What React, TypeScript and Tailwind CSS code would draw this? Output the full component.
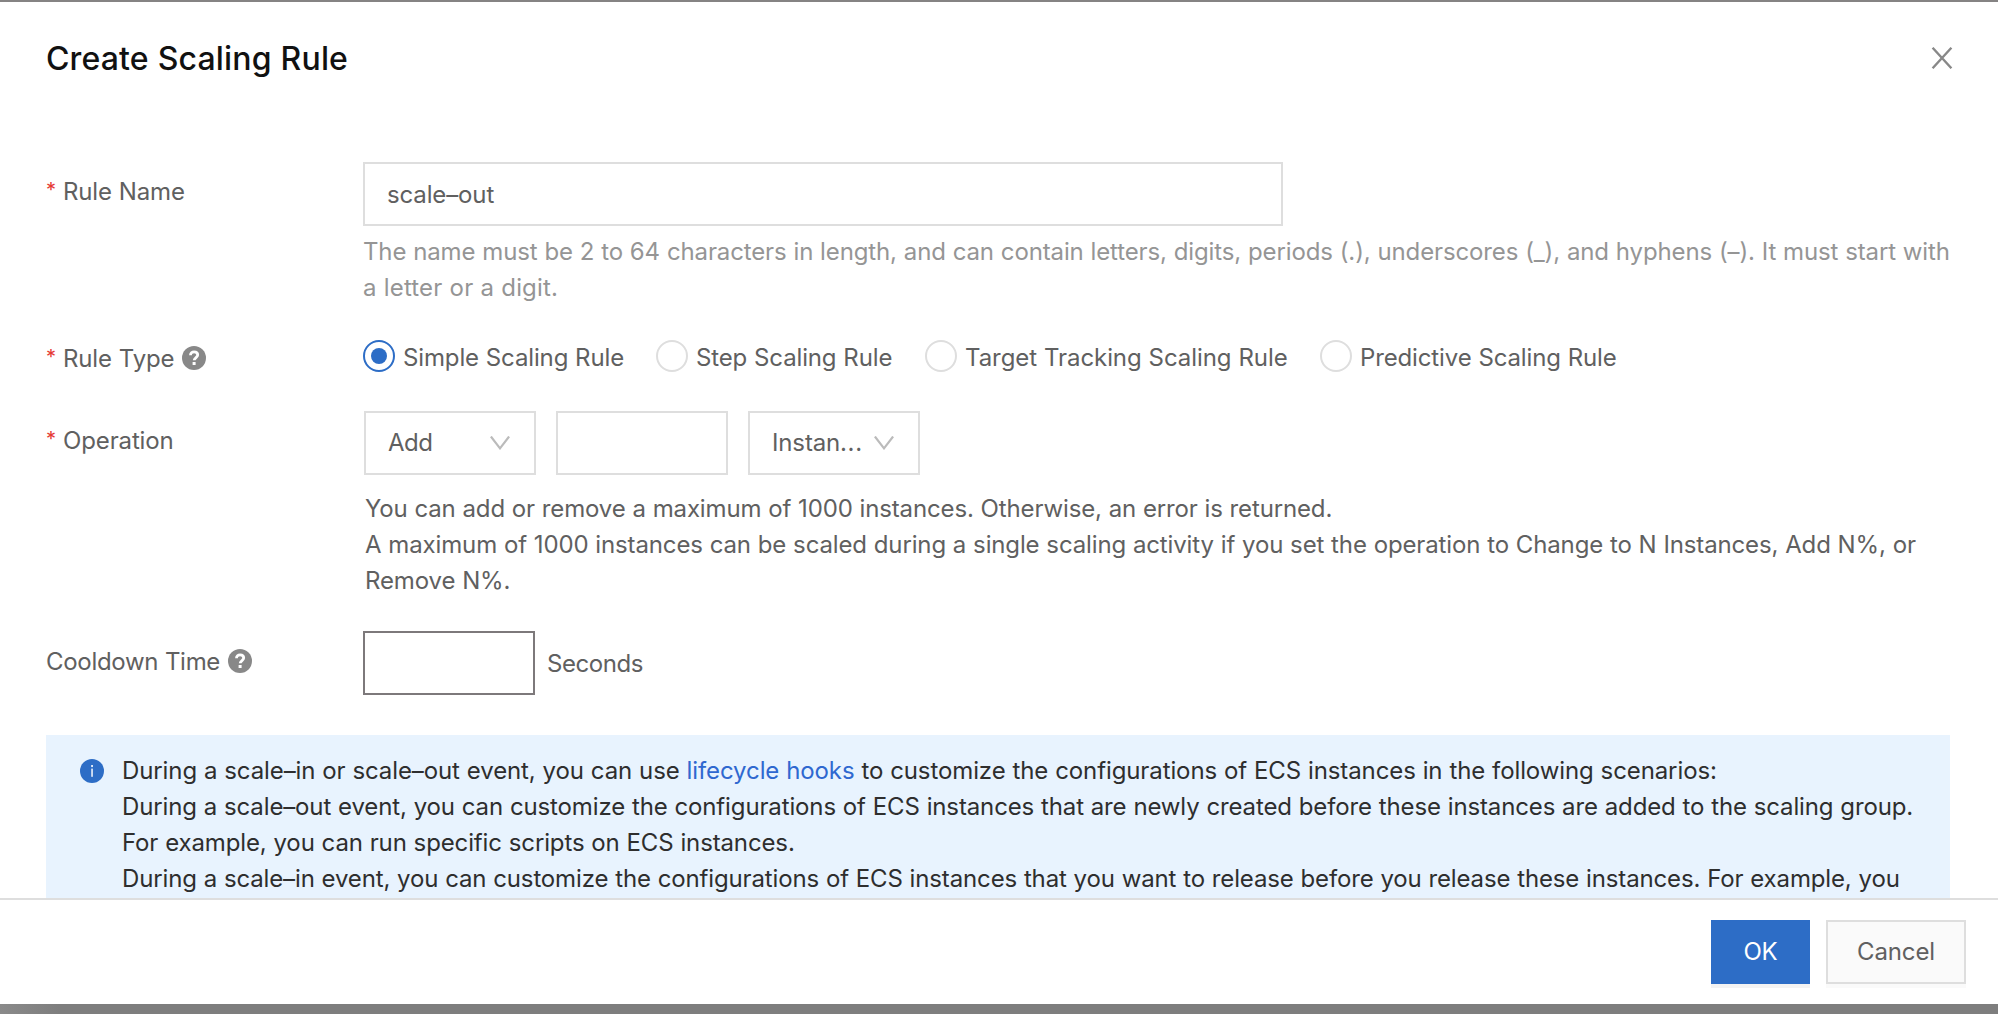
import type { ReactNode } from 'react';

function HelpIcon() {
  return (
    <svg className="h-6 w-6 shrink-0" viewBox="0 0 24 24" fill="none">
      <circle cx="12" cy="12" r="12" fill="#888" />
      <path
        d="M8.5 9.3c0-2.1 1.5-3.4 3.6-3.4s3.6 1.3 3.6 3.1c0 2.4-3.5 2.7-3.5 5.3"
        stroke="#fff"
        strokeWidth="2.8"
      />
      <rect x="10.6" y="16" width="3" height="3" fill="#fff" />
    </svg>
  );
}

function InfoIcon() {
  return (
    <svg className="h-6 w-6 shrink-0" viewBox="0 0 24 24">
      <circle cx="12" cy="12" r="12" fill="#2d6dc6" />
      <rect x="11.1" y="6" width="1.9" height="2.1" fill="#fff" fillOpacity="0.85" />
      <rect x="11.2" y="9.6" width="1.7" height="8.2" fill="#fff" fillOpacity="0.85" />
    </svg>
  );
}

function Chevron() {
  return (
    <svg className="h-[14px] w-5 shrink-0" viewBox="0 0 20 14" fill="none">
      <path d="M0.9 0.5 10 12.3 19.1 0.5" stroke="#bbb" strokeWidth="2.2" />
    </svg>
  );
}

function Label({ text, required, help, className }: { text: string; required?: boolean; help?: boolean; className: string }) {
  return (
    <div className={`flex h-9 w-[317px] shrink-0 ${className}`}>
      {required && <span className="w-[17px] shrink-0 text-[20px] leading-[32px] text-[#e53935]">*</span>}
      <span>{text}</span>
      {help && (
        <span className="ml-2 mt-[5px]">
          <HelpIcon />
        </span>
      )}
    </div>
  );
}

function Radio({ label, checked, className = '' }: { label: string; checked?: boolean; className?: string }) {
  return (
    <label className={`flex shrink-0 ${className}`}>
      <span
        className={`-mt-px flex h-8 w-8 items-center justify-center rounded-full border-2 ${
          checked ? 'border-[#2d6dc6]' : 'border-[#dedede]'
        }`}
      >
        {checked && <span className="h-4 w-4 rounded-full bg-[#2d6dc6]" />}
      </span>
      <span className="-mt-px ml-2 whitespace-nowrap">{label}</span>
    </label>
  );
}

function Select({ children }: { children: ReactNode }) {
  return (
    <div className="flex h-16 w-[172px] items-center justify-between border-2 border-[#dedede] pr-6 pl-[22px]">
      <span>{children}</span>
      <Chevron />
    </div>
  );
}

export default function App() {
  return (
    <div className="flex h-[1014px] w-[1998px] flex-col overflow-hidden bg-[#808080] font-[Inter,sans-serif] text-2xl leading-9 font-normal tracking-[-0.135px] text-[#606060] [word-spacing:0.28px]">
      <div className="h-[2px] shrink-0 bg-[#858383]" />
      <div className="flex h-[896px] shrink-0 flex-col overflow-hidden bg-white pr-12 pl-[46px]">
        <header className="flex h-[160px] shrink-0 items-start justify-between pt-[36px]">
          <h1 className="text-[32px] leading-[41px] font-medium tracking-[0.15px] text-[#111]">Create Scaling Rule</h1>
          <button className="mt-[9px] mr-[-3px]" aria-label="Close">
            <svg className="h-[22px] w-[22px]" viewBox="0 0 22 22" fill="none">
              <path d="M1.6 0.8 20.4 21.2M20.4 0.8 1.6 21.2" stroke="#888" strokeWidth="2.4" />
            </svg>
          </button>
        </header>

        <section className="flex h-[179px] shrink-0">
          <Label text="Rule Name" required className="mt-[12px]" />
          <div className="w-[1600px]">
            <div className="flex h-16 w-[920px] items-center border-2 border-[#dedede] pt-[2px] pl-[22px]">scale–out</div>
            <p className="mt-[8px] whitespace-nowrap tracking-[-0.125px] text-[#959595]">
              The name must be 2 to 64 characters in length, and can contain letters, digits, periods (.), underscores (_), and hyphens (–). It must start with
              <br />
              <span className="tracking-[0.15px]">a letter or a digit.</span>
            </p>
          </div>
        </section>

        <section className="flex h-[70px] shrink-0">
          <Label text="Rule Type" required help className="" />
          <Radio label="Simple Scaling Rule" checked className="w-[293px]" />
          <Radio label="Step Scaling Rule" className="w-[269px]" />
          <Radio label="Target Tracking Scaling Rule" className="w-[395px] tracking-[-0.07px]" />
          <Radio label="Predictive Scaling Rule" />
        </section>

        <section className="flex h-[220px] shrink-0">
          <Label text="Operation" required className="mt-[12px]" />
          <div className="ml-px">
            <div className="flex gap-5">
              <Select>
                <span className="tracking-[-0.5px]">Add</span>
              </Select>
              <div className="h-16 w-[172px] border-2 border-[#dedede]" />
              <Select>
                Instan<span className="tracking-[0.6px]">...</span>
              </Select>
            </div>
            <p className="mt-[16px] ml-px whitespace-nowrap">
              <span className="tracking-[-0.145px]">
                You can add or remove a maximum of 1000 instances. Otherwise, an error is returned.
              </span>
              <br />
              A maximum of 1000 instances can be scaled during a single scaling activity if you set the operation to Change to N Instances, Add N%, or
              <br />
              Remove N%.
            </p>
          </div>
        </section>

        <section className="flex h-[104px] shrink-0">
          <Label text="Cooldown Time" help className="mt-[13px] tracking-[-0.3px]" />
          <div className="h-16 w-[172px] border-2 border-[#7d797b]" />
          <span className="mt-[15px] ml-3 tracking-[-0.45px]">Seconds</span>
        </section>

        <section className="flex h-[240px] shrink-0 bg-[#e8f3fe] pt-[18px] pl-[34px] text-[#2e2e2e]">
          <span className="mt-[6px]">
            <InfoIcon />
          </span>
          <p className="ml-[18px] whitespace-nowrap tracking-[-0.13px]">
            <span className="tracking-[-0.1px]">
              During a scale–in or scale–out event, you can use <a className="text-[#2f68d0]">lifecycle hooks</a> to customize the configurations of ECS instances in the following scenarios:
            </span>
            <br />
            During a scale–out event, you can customize the configurations of ECS instances that are newly created before these instances are added to the scaling group.
            <br />
            For example, you can run specific scripts on ECS instances.
            <br />
            <span className="tracking-[-0.14px]">
              During a scale–in event, you can customize the configurations of ECS instances that you want to release before you release these instances. For example, you
            </span>
          </p>
        </section>
      </div>

      <footer className="flex h-[106px] shrink-0 justify-end gap-4 border-t-2 border-[#dedede] bg-white pt-5 pr-8">
        <button className="h-16 w-[99px] bg-[#2d6dc6] text-white shadow-[0_4px_0_#f3f3f3]">OK</button>
        <button className="h-16 w-[140px] border-2 border-[#dedede] bg-[#fafafa] shadow-[0_4px_0_#fafafa]">Cancel</button>
      </footer>
      <div className="h-[10px] shrink-0 bg-linear-to-r from-[#8a8a8a] via-[#7e7e7e] via-3% to-[#7e7e7e]" />
    </div>
  );
}
